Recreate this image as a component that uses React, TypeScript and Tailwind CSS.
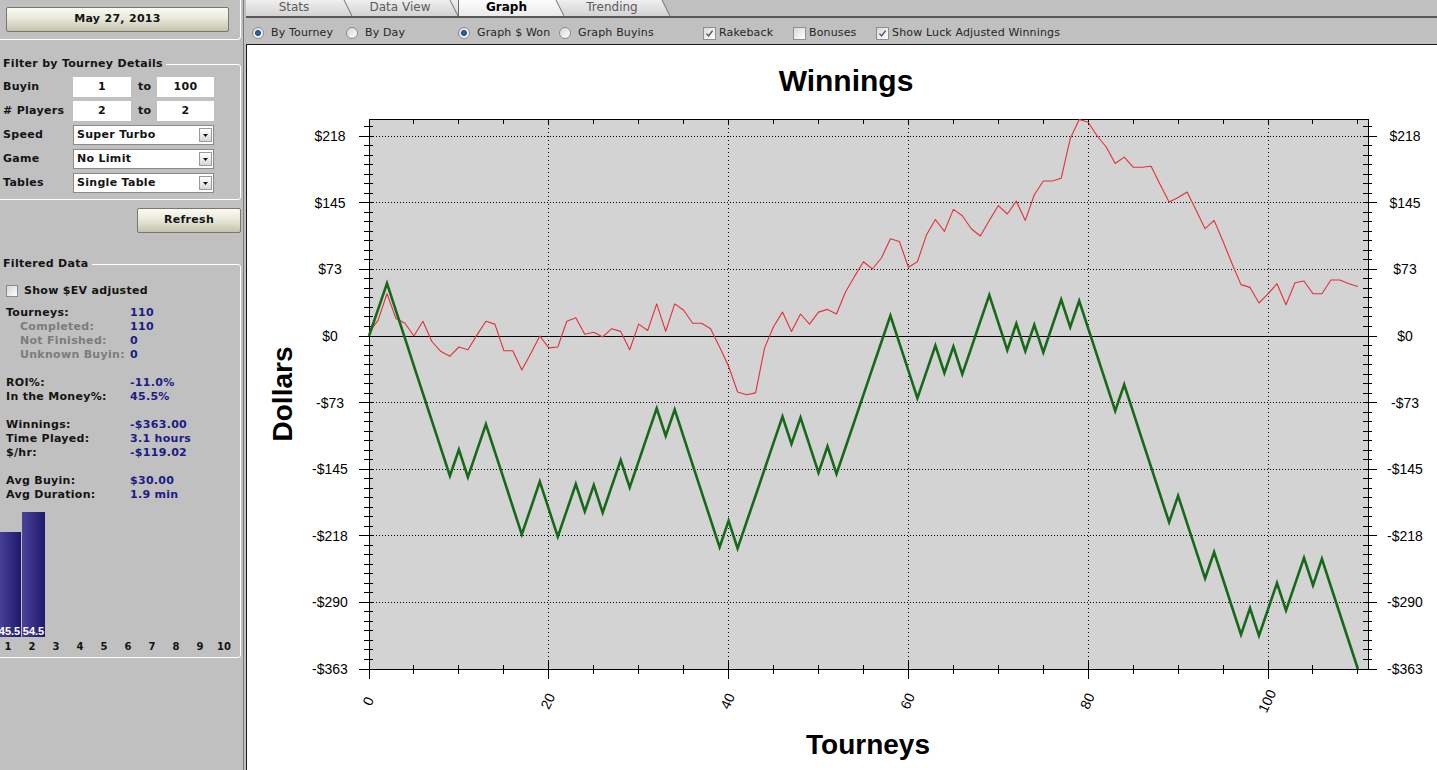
import React from 'react'

const UI = "font-['DejaVu_Sans',Verdana,sans-serif]"

// luck adjusted winnings, one value per tourney (0..110)
const red = [
  4, 17, 46, 19, 14, 0, 16, -6, -17, -22, -12, -15, 1, 16, 13, -16, -16, -37, -19, 0,
  -13, -12, 16, 20, 2, 4, -1, 8, 5, -15, 13, 6, 35, 5, 35, 28, 14, 14, 8, -12,
  -33, -61, -64, -62, -13, 10, 26, 5, 24, 13, 26, 29, 24, 48, 65, 81, 73, 85, 106, 103,
  75, 81, 110, 127, 114, 138, 131, 117, 109, 126, 142, 133, 147, 126, 154, 169, 169, 172, 215, 236,
  233, 218, 206, 188, 195, 184, 184, 185, 165, 146, 151, 157, 137, 117, 126, 103, 79, 56, 53, 36,
  46, 57, 34, 58, 60, 46, 46, 61, 61, 57, 54,
]

// W = won (+$28.74), L = lost the $30 buyin
const results =
  'WWLLLLLLLWLWWLLLLWWLLWWLWLWWLWWWLWLLLLLWLWWWWWLWLLWLWWWWWWLLLWWLWLWWWLLWLWLWWLWLLLLWLLLLLWLLLWLLLWLWWLWWLWLLLL'

const X = (i: number) => 369 + i * 8.99
const Y = (v: number) => 336 - v * 0.9174

function series() {
  let v = 0
  const out = [0]
  for (const c of results) {
    v += c === 'W' ? 28.74 : -30
    out.push(v)
  }
  return out
}

const toPath = (vals: number[]) =>
  vals.map((v, i) => `${i === 0 ? 'M' : 'L'}${X(i).toFixed(1)},${Y(v).toFixed(1)}`).join(' ')

function Tab({ label, active, next }: { label: string; active?: boolean; next: 'tab' | 'bar' }) {
  const own = active ? ['#fdfdfd', '#eaeaea'] : ['#efefef', '#d3d3d3']
  const id = `tab-${label.replace(' ', '')}`
  return (
    <div className="flex h-full">
      <div
        className={`w-[96px] h-full flex justify-center text-[12px] leading-[14px] ${
          active
            ? 'bg-gradient-to-b from-[#fdfdfd] to-[#eaeaea] font-bold text-black border-l border-[#6a6a6a]'
            : 'bg-gradient-to-b from-[#efefef] to-[#d3d3d3] text-[#5c5c5c]'
        }`}
      >
        {label}
      </div>
      <svg width="10" height="16" className="block">
        <defs>
          <linearGradient id={id} x1="0" y1="0" x2="0" y2="1">
            <stop offset="0" stopColor={own[0]} />
            <stop offset="1" stopColor={own[1]} />
          </linearGradient>
          <linearGradient id={`${id}-n`} x1="0" y1="0" x2="0" y2="1">
            <stop offset="0" stopColor="#efefef" />
            <stop offset="1" stopColor="#d3d3d3" />
          </linearGradient>
        </defs>
        <rect width="10" height="16" fill={next === 'bar' ? '#c0c0c0' : `url(#${id}-n)`} />
        <polygon points="0,0 2,0 10,16 0,16" fill={`url(#${id})`} />
        <line x1="2" y1="0" x2="10" y2="16" stroke="#707070" strokeWidth="1" />
      </svg>
    </div>
  )
}

const Radio = ({ on }: { on?: boolean }) => (
  <span className="w-[12px] h-[12px] rounded-full border border-[#8c8c8c] bg-gradient-to-br from-[#d6d6d6] to-white flex items-center justify-center shrink-0">
    {on && <span className="w-[6px] h-[6px] rounded-full bg-[#2466b4] border border-[#123d73]" />}
  </span>
)

const Check = ({ on }: { on?: boolean }) => (
  <span className="w-[13px] h-[13px] border border-[#8f8f8f] bg-gradient-to-br from-[#d9d9d9] to-white flex items-center justify-center shrink-0">
    {on && (
      <svg width="9" height="9" viewBox="0 0 9 9">
        <path d="M1.5 4.6 L3.6 7 L7.6 1.6" fill="none" stroke="#4a5569" strokeWidth="1.4" />
      </svg>
    )}
  </span>
)

function Field({ value }: { value: string }) {
  return <div className="h-[20px] bg-white flex items-center justify-center font-bold">{value}</div>
}

function Select({ value }: { value: string }) {
  return (
    <div className="w-[141px] h-[20px] bg-white border border-[#8a8a8a] flex items-center pl-[3px] font-bold">
      <span className="flex-1">{value}</span>
      <span className="w-[13px] h-[14px] mr-[1px] border border-[#9a9a9a] bg-gradient-to-b from-white to-[#d8d8d8] flex items-center justify-center">
        <svg width="5" height="3" viewBox="0 0 5 3">
          <path d="M0 0 H5 L2.5 3 Z" fill="#111" />
        </svg>
      </span>
    </div>
  )
}

const btn =
  'bg-gradient-to-b from-[#fbfbf4] via-[#e6e6d8] to-[#c3c3ad] border border-[#77776a] rounded-[2px] font-bold text-[11px] text-[#141414] flex items-center justify-center'

type Stat = { label: string; value?: string; sub?: boolean } | null

const stats: Stat[] = [
  { label: 'Tourneys:', value: '110' },
  { label: 'Completed:', value: '110', sub: true },
  { label: 'Not Finished:', value: '0', sub: true },
  { label: 'Unknown Buyin:', value: '0', sub: true },
  null,
  { label: 'ROI%:', value: '-11.0%' },
  { label: 'In the Money%:', value: '45.5%' },
  null,
  { label: 'Winnings:', value: '-$363.00' },
  { label: 'Time Played:', value: '3.1 hours' },
  { label: '$/hr:', value: '-$119.02' },
  null,
  { label: 'Avg Buyin:', value: '$30.00' },
  { label: 'Avg Duration:', value: '1.9 min' },
]

const finishes = [45.5, 54.5, 0, 0, 0, 0, 0, 0, 0, 0]

function LeftPanel() {
  return (
    <div
      className={`${UI} w-[244px] h-[770px] shrink-0 bg-[#c0c0c0] border-r border-[#7a7a7a] overflow-hidden text-[11px] tracking-[0.3px] text-[#141414]`}
    >
      <div className="w-[241px] h-[40px] border-r border-b border-white rounded-br-[4px] pt-[7px] pl-[6px]">
        <div className={`${btn} w-[223px] h-[25px]`}>May 27, 2013</div>
      </div>

      <fieldset className="mt-[17px] -ml-[3px] w-[244px] border border-white rounded-[3px] pt-[4px] pb-[4px]">
        <legend className="pl-[5px] pr-[3px] leading-[14px] font-bold">Filter by Tourney Details</legend>
        {[
          ['Buyin', '1', '100'],
          ['# Players', '2', '2'],
        ].map(([l, a, b]) => (
          <div key={l} className="flex items-center h-[24px] pl-[5px]">
            <span className="w-[70px] font-bold">{l}</span>
            <div className="w-[58px]">
              <Field value={a} />
            </div>
            <span className="w-[26px] pl-[7px] font-bold">to</span>
            <div className="w-[57px]">
              <Field value={b} />
            </div>
          </div>
        ))}
        {[
          ['Speed', 'Super Turbo'],
          ['Game', 'No Limit'],
          ['Tables', 'Single Table'],
        ].map(([l, v]) => (
          <div key={l} className="flex items-center h-[24px] pl-[5px]">
            <span className="w-[70px] font-bold">{l}</span>
            <Select value={v} />
          </div>
        ))}
      </fieldset>

      <div className={`${btn} mt-[8px] ml-[137px] w-[104px] h-[25px]`}>Refresh</div>

      <fieldset className="mt-[24px] -ml-[3px] w-[244px] border border-white rounded-[3px] pt-[13px] pb-[4px]">
        <legend className="pl-[5px] pr-[3px] leading-[14px] font-bold">Filtered Data</legend>
        <div className="flex items-center h-[14px] pl-[8px] gap-[6px] font-bold">
          <span className="w-[12px] h-[12px] border border-[#8a8a8a] bg-gradient-to-br from-[#d4d4d4] to-white" />
          Show $EV adjusted
        </div>

        <div className="mt-[8px] font-bold leading-[14px]">
          {stats.map((s, i) =>
            s ? (
              <div key={i} className="flex h-[14px]">
                <span className={`w-[132px] ${s.sub ? 'pl-[22px] text-[#7c7c7c]' : 'pl-[8px]'}`}>{s.label}</span>
                <span className="text-[#1c1c86]">{s.value}</span>
              </div>
            ) : (
              <div key={i} className="h-[14px]" />
            )
          )}
        </div>

        <div className="h-[135px] flex items-end">
          {finishes.map((p, i) => (
            <div key={i} className="w-[24px] shrink-0 flex items-end">
              {p > 0 && (
                <div
                  className="w-[23px] bg-gradient-to-r from-[#4d4199] to-[#1d196d] flex flex-col justify-end items-center"
                  style={{ height: p * 2.3 }}
                >
                  <span className="font-['Liberation_Sans',Arial,sans-serif] text-white font-bold text-[11px] leading-[12px] tracking-normal">
                    {p}
                  </span>
                </div>
              )}
            </div>
          ))}
        </div>
        <div className="mt-[2px] h-[14px] -ml-[2px] flex items-center font-bold text-[10px] tracking-normal">
          {finishes.map((_, i) => (
            <span key={i} className="w-[24px] shrink-0 text-center">
              {i + 1}
            </span>
          ))}
        </div>
      </fieldset>
    </div>
  )
}

function Chart() {
  const green = series()
  const majors = [3, 2, 1, 0, -1, -2, -3, -4, -5]
  const label = (k: number) => {
    const v = Math.round(Math.abs(k) * 72.6)
    return `${k < 0 ? '-' : ''}$${v}`
  }
  const minorY: number[] = []
  for (let n = 0; 669 - n * 9.514 >= 120; n++) minorY.push(669 - n * 9.514)
  const xTicks: number[] = []
  for (let i = 0; i <= 110; i += 5) xTicks.push(i)

  return (
    <svg
      width="1190"
      height="725"
      viewBox="247 45 1190 725"
      className="block font-['Liberation_Sans',Arial,sans-serif]"
    >
      <rect x="369" y="119" width="999" height="550" fill="#d3d3d3" />

      <g shapeRendering="crispEdges" stroke="#000" strokeWidth="1">
        {majors
          .filter((k) => k !== 0 && k !== -5)
          .map((k) => (
            <line key={k} x1="373" x2="1364" y1={336 - 66.6 * k} y2={336 - 66.6 * k} strokeDasharray="1 2" />
          ))}
        {[20, 40, 60, 80, 100].map((i) => (
          <line key={i} x1={X(i)} x2={X(i)} y1="124" y2="665" strokeDasharray="1 3" />
        ))}
        <line x1="369" x2="1368" y1="336" y2="336" />
        <rect x="369" y="119" width="999" height="550" fill="none" />

        {minorY.map((y) => (
          <g key={y}>
            <line x1="364" x2="373" y1={y} y2={y} />
            <line x1="1363" x2="1372" y1={y} y2={y} />
          </g>
        ))}
        {majors.map((k) => (
          <g key={k}>
            <line x1="359" x2="373" y1={336 - 66.6 * k} y2={336 - 66.6 * k} />
            <line x1="1363" x2="1377" y1={336 - 66.6 * k} y2={336 - 66.6 * k} />
          </g>
        ))}
        {xTicks.map((i) => (
          <g key={i}>
            <line x1={X(i)} x2={X(i)} y1={i % 20 === 0 && i > 0 ? 660 : 665} y2={i % 20 === 0 ? 679 : 674} />
            <line x1={X(i)} x2={X(i)} y1="119" y2="124" />
          </g>
        ))}
      </g>

      <path d={toPath(red)} fill="none" stroke="#e4303a" strokeWidth="1.1" strokeLinejoin="round" />
      <path d={toPath(green)} fill="none" stroke="#17691a" strokeWidth="2.6" strokeLinejoin="miter" />

      <g fontSize="14" fill="#000">
        {majors.map((k) => (
          <g key={k}>
            <text x="330" y={336 - 66.6 * k} textAnchor="middle" dominantBaseline="central">
              {label(k)}
            </text>
            <text x="1405" y={336 - 66.6 * k} textAnchor="middle" dominantBaseline="central">
              {label(k)}
            </text>
          </g>
        ))}
        {[0, 20, 40, 60, 80, 100].map((i) => (
          <text
            key={i}
            x={X(i) - 1}
            y="701"
            textAnchor="middle"
            dominantBaseline="central"
            transform={`rotate(-65 ${X(i) - 1} 701)`}
          >
            {i}
          </text>
        ))}
      </g>

      <text x="846" y="91" textAnchor="middle" fontSize="30" fontWeight="bold">
        Winnings
      </text>
      <text x="868" y="754" textAnchor="middle" fontSize="28" fontWeight="bold">
        Tourneys
      </text>
      <text x="292" y="394" textAnchor="middle" fontSize="28" fontWeight="bold" transform="rotate(-90 292 394)">
        Dollars
      </text>
    </svg>
  )
}

export default function App() {
  const opts: { label: string; w: string; kind: 'radio' | 'check'; on?: boolean }[] = [
    { label: 'By Tourney', w: 'w-[94px]', kind: 'radio', on: true },
    { label: 'By Day', w: 'w-[112px]', kind: 'radio' },
    { label: 'Graph $ Won', w: 'w-[101px]', kind: 'radio', on: true },
    { label: 'Graph Buyins', w: 'w-[144px]', kind: 'radio' },
    { label: 'Rakeback', w: 'w-[90px]', kind: 'check', on: true },
    { label: 'Bonuses', w: 'w-[83px]', kind: 'check' },
    { label: 'Show Luck Adjusted Winnings', w: 'w-[200px]', kind: 'check', on: true },
  ]

  return (
    <div className="flex w-[1437px] h-[770px] overflow-hidden bg-[#c0c0c0]">
      <LeftPanel />
      <div className={`${UI} flex-1 flex flex-col pl-[2px] bg-[#c0c0c0]`}>
        <div className="h-[18px] flex border-b-2 border-[#575757]">
          <Tab label="Stats" next="tab" />
          <Tab label="Data View" next="tab" />
          <Tab label="Graph" active next="tab" />
          <Tab label="Trending" next="bar" />
        </div>
        <div className="h-[26px] pt-[4px] pl-[6px] flex items-center text-[11px] tracking-[0.15px] text-[#262626]">
          {opts.map((o) => (
            <div
              key={o.label}
              className={`${o.w} shrink-0 flex items-center ${o.kind === 'radio' ? 'gap-[7px]' : 'gap-[3px]'}`}
            >
              {o.kind === 'radio' ? <Radio on={o.on} /> : <Check on={o.on} />}
              <span>{o.label}</span>
            </div>
          ))}
        </div>
        <div className="flex-1 bg-white border-l border-t border-[#1a1a1a] overflow-hidden">
          <Chart />
        </div>
      </div>
    </div>
  )
}
